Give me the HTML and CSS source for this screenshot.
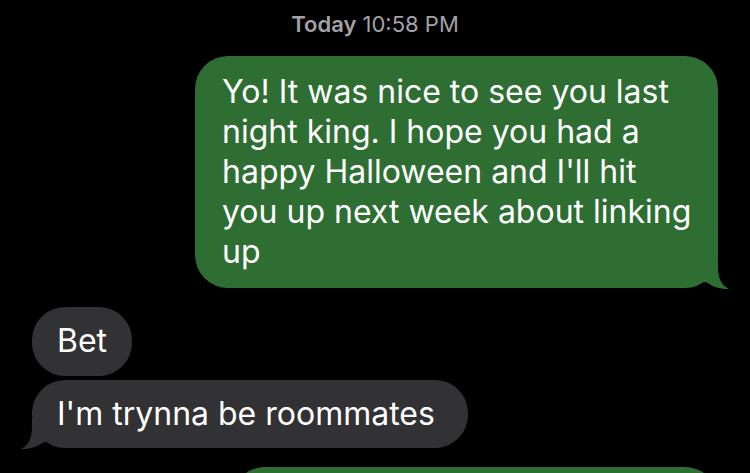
FILE: index.html
```html
<!DOCTYPE html>
<html lang="en">
<head>
<meta charset="utf-8">
<title>Messages</title>
<link rel="stylesheet" href="styles.css">
</head>
<body>
<main class="thread">
  <div class="stamp"><span class="day">Today</span> 10:58 PM</div>

  <div class="bubble out tail">
    Yo! It was nice to see you last<br>
    night king. I hope you had a<br>
    happy Halloween and I'll hit<br>
    you up next week about linking<br>
    up
    <svg class="tail-svg tail-right" viewBox="0 0 30 32" width="30" height="32" aria-hidden="true">
      <path d="M0,0 H18 V8 C18,20 21,27 29,31 C21,31.5 13,29 6,24 L0,24 Z" />
    </svg>
  </div>

  <div class="group">
    <div class="bubble in">Bet</div>
    <div class="bubble in tail">
      I'm trynna be roommates
      <svg class="tail-svg tail-left" viewBox="0 0 30 32" width="30" height="32" aria-hidden="true">
        <path d="M30,0 H12 V8 C12,20 9,27 1,31 C9,31.5 17,29 24,24 L30,24 Z" />
      </svg>
    </div>
  </div>

  <div class="bubble out next"></div>
</main>
</body>
</html>
```

FILE: styles.css
```css
html, body {
  margin: 0;
  padding: 0;
  background: #000;
}

body {
  width: 750px;
  height: 473px;
  overflow: hidden;
  font-family: Inter, "Noto Sans", "Liberation Sans", sans-serif;
  color: #fff;
}

.thread {
  display: flex;
  flex-direction: column;
  padding-top: 9px;
  height: 473px;
  box-sizing: border-box;
  overflow: hidden;
}

.stamp {
  align-self: center;
  font-size: 22px;
  line-height: 30px;
  color: #a2a2a7;
  margin-bottom: 17px;
}

.stamp .day {
  font-weight: 600;
}

.bubble {
  position: relative;
  flex-shrink: 0;
  font-size: 32px;
  line-height: 40px;
  border-radius: 33px;
  box-sizing: border-box;
}

.bubble.out {
  align-self: flex-end;
  margin-right: 32px;
  background: #2e6e32;
  fill: #2e6e32;
}

.bubble.out.tail {
  width: 523px;
  padding: 16px 20px 16px 27px;
}

.group {
  display: flex;
  flex-direction: column;
  align-items: flex-start;
  gap: 4px;
  margin-top: 19px;
  margin-left: 32px;
}

.bubble.in {
  background: #323234;
  fill: #323234;
  padding: 14px 25px 15px 25px;
}

.bubble.in.tail {
  padding: 14px 33px 14px 25px;
}

.tail-svg {
  position: absolute;
  bottom: -2px;
  display: block;
}

.tail-right {
  right: -12px;
}

.tail-left {
  left: -12px;
}

.bubble.next {
  margin-top: 19px;
  width: 486px;
  height: 70px;
}
```
